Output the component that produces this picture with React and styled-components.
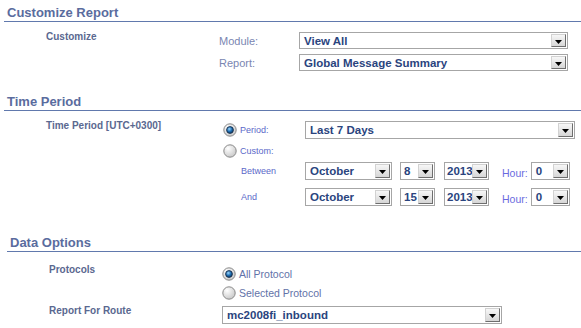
import * as React from "react"
import styled, { createGlobalStyle } from "styled-components"

const GlobalStyle = createGlobalStyle`
  body {
    margin: 0;
    background: #ffffff;
    font-family: "Liberation Sans", Arial, sans-serif;
  }
`

const Page = styled.div`
  width: 581px;
  height: 328px;
  overflow: hidden;
  background: #ffffff;
`

const Section = styled.section`
  margin-top: ${({ $top }) => $top || 0}px;
  padding-left: ${({ $shift }) => $shift || 0}px;
`

const Title = styled.h2`
  margin: 0 0 0 4px;
  height: 16px;
  padding: 5px 0 0 3px;
  line-height: 15px;
  font-size: 13px;
  font-weight: bold;
  color: #5a6c9e;
  border-bottom: 1px solid #6179ad;
`

const Body = styled.div`
  padding: ${({ $top }) => $top}px 0 0 46px;
`

const FieldRow = styled.div`
  display: flex;
  align-items: flex-start;
  margin-top: ${({ $gap }) => $gap || 0}px;
`

const FieldLabel = styled.div`
  width: ${({ $w }) => $w}px;
  flex-shrink: 0;
  margin-top: -1px;
  font-size: 10px;
  font-weight: bold;
  line-height: 12px;
  color: #5a6890;
`

const Controls = styled.div`
  display: flex;
  flex-direction: column;
`

const ControlRow = styled.div`
  display: flex;
  align-items: center;
  height: ${({ $h }) => $h || 18}px;
  margin-top: ${({ $gap }) => $gap || 0}px;
`

const SubLabel = styled.span`
  width: 80px;
  flex-shrink: 0;
  font-size: 11px;
  color: #7a86b2;
`

const OptionText = styled.span`
  width: ${({ $w }) => $w}px;
  flex-shrink: 0;
  padding-left: ${({ $indent }) => $indent || 0}px;
  box-sizing: border-box;
  font-size: ${({ $size }) => $size || 9}px;
  color: ${({ $color }) => $color || "#5b68c9"};
`

const HourLabel = styled.span`
  align-self: flex-end;
  margin: 0 3px 0 13px;
  font-size: 10.5px;
  line-height: 13px;
  color: #6a6ae0;
`

const RadioMark = styled.svg`
  flex-shrink: 0;
  margin-right: 3px;
`

const SelectBox = styled.div`
  display: flex;
  align-items: stretch;
  box-sizing: border-box;
  flex-shrink: 0;
  width: ${({ $w }) => $w}px;
  height: ${({ $h }) => $h || 18}px;
  margin-right: ${({ $after }) => $after || 0}px;
  border: 1px solid #a6a6a6;
  background: #ffffff;
`

const SelectValue = styled.span`
  flex: 1;
  min-width: 0;
  display: flex;
  align-items: center;
  padding-left: ${({ $pad }) => $pad}px;
  white-space: nowrap;
  font-size: 11.5px;
  font-weight: bold;
  color: #2a447e;
`

const ArrowButton = styled.span`
  display: flex;
  flex-shrink: 0;
  align-items: center;
  justify-content: center;
  width: 15px;
  margin: 1px;
  box-sizing: border-box;
  border: 1px solid;
  border-color: #d2d2d2 #6e6e6e #6e6e6e #d2d2d2;
  background: linear-gradient(#f7f7f7, #d6d6d6);

  svg {
    margin-top: 2px;
  }
`

const Radio = ({ checked }) => (
  <RadioMark width="14" height="14" viewBox="0 0 14 14">
    <defs>
      <radialGradient id="radioBg" cx="35%" cy="30%" r="80%">
        <stop offset="0" stopColor="#ffffff" />
        <stop offset="1" stopColor="#c4c4c4" />
      </radialGradient>
      <radialGradient id="radioDot" cx="40%" cy="35%" r="70%">
        <stop offset="0" stopColor="#9ad6ff" />
        <stop offset="0.55" stopColor="#1c6cb0" />
        <stop offset="1" stopColor="#0b3560" />
      </radialGradient>
    </defs>
    <circle cx="7" cy="7" r="6.2" fill="url(#radioBg)" stroke="#8a8a8a" strokeWidth="1" />
    {checked && (
      <circle cx="7" cy="7" r="3.4" fill="url(#radioDot)" stroke="#1a2f4a" strokeWidth="0.9" />
    )}
  </RadioMark>
)

const Select = ({ value, width, height, after, pad = 4 }) => (
  <SelectBox $w={width} $h={height} $after={after}>
    <SelectValue $pad={pad}>{value}</SelectValue>
    <ArrowButton>
      <svg width="7" height="4" viewBox="0 0 7 4">
        <polygon points="0,0 7,0 3.5,4" fill="#000" />
      </svg>
    </ArrowButton>
  </SelectBox>
)

const DateRow = ({ day, gap }) => (
  <ControlRow $gap={gap}>
    <OptionText $w={82} $indent={18}>{day.label}</OptionText>
    <Select value="October" width={87} after={8} />
    <Select value={day.date} width={35} after={9} pad={3} />
    <Select value="2013" width={45} pad={2} />
    <HourLabel>Hour:</HourLabel>
    <Select value="0" width={39} />
  </ControlRow>
)

export default function App() {
  return (
    <Page>
      <GlobalStyle />

      <Section>
        <Title>Customize Report</Title>
        <Body $top={10}>
          <FieldRow>
            <FieldLabel $w={173}>Customize</FieldLabel>
            <Controls>
              <ControlRow $h={17}>
                <SubLabel>Module:</SubLabel>
                <Select value="View All" width={269} height={17} />
              </ControlRow>
              <ControlRow $h={17} $gap={5}>
                <SubLabel>Report:</SubLabel>
                <Select value="Global Message Summary" width={269} height={17} />
              </ControlRow>
            </Controls>
          </FieldRow>
        </Body>
      </Section>

      <Section $top={18}>
        <Title>Time Period</Title>
        <Body $top={10}>
          <FieldRow>
            <FieldLabel $w={177}>Time Period [UTC+0300]</FieldLabel>
            <Controls>
              <ControlRow>
                <Radio checked />
                <OptionText $w={65}>Period:</OptionText>
                <Select value="Last 7 Days" width={270} />
              </ControlRow>
              <ControlRow $h={19} $gap={2}>
                <Radio />
                <OptionText $w={65}>Custom:</OptionText>
              </ControlRow>
              <DateRow gap={2} day={{ label: "Between", date: "8" }} />
              <DateRow gap={8} day={{ label: "And", date: "15" }} />
            </Controls>
          </FieldRow>
        </Body>
      </Section>

      <Section $top={24} $shift={3}>
        <Title>Data Options</Title>
        <Body $top={13}>
          <FieldRow>
            <FieldLabel $w={173}>Protocols</FieldLabel>
            <Controls>
              <ControlRow>
                <Radio checked />
                <OptionText $w={120} $size={10.5} $color="#6272a8">All Protocol</OptionText>
              </ControlRow>
              <ControlRow $gap={1}>
                <Radio />
                <OptionText $w={120} $size={10.5} $color="#6272a8">Selected Protocol</OptionText>
              </ControlRow>
            </Controls>
          </FieldRow>
          <FieldRow $gap={4}>
            <FieldLabel $w={173}>Report For Route</FieldLabel>
            <Select value="mc2008fi_inbound" width={280} />
          </FieldRow>
        </Body>
      </Section>
    </Page>
  )
}
